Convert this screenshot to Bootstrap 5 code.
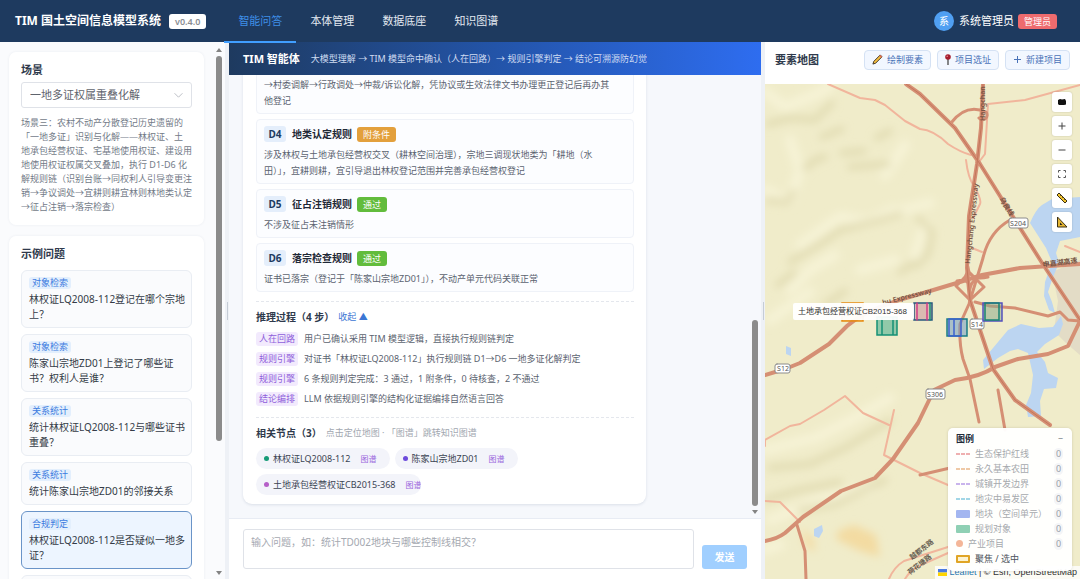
<!DOCTYPE html>
<html lang="zh-CN">
<head>
<meta charset="utf-8">
<meta name="viewport" content="width=device-width, initial-scale=1">
<title>TIM 国土空间信息模型系统</title>
<link href="https://cdn.jsdelivr.net/npm/bootstrap@5.3.0/dist/css/bootstrap.min.css" rel="stylesheet">
<style>
  :root { --navy: #1e3a5f; --line: #e8ecf2; --ink: #2f3a4c; --body: #5b6370; }
  body { font-family: "Noto Sans", "Noto Sans CJK SC", sans-serif; font-size: 9px; line-height: 14px; color: var(--body); background: #f5f7fb; }
  .topbar { height: 42px; background: var(--navy); color: #fff; padding: 0 23px 0 15px; }
  .brand-name { font-size: 12px; line-height: 18px; font-weight: 700; }
  .version { background: #fff; color: #8a8d93; font-weight: 600; padding: 0 6px; border-radius: 3px; line-height: 15px; margin-left: 8px; }
  .main-menu { margin-left: 18px; height: 42px; }
  .main-menu a { width: 72px; text-align: center; color: #e3e9f1; font-size: 11px; line-height: 41px; height: 43px; text-decoration: none; position: relative; z-index: 2; }
  .main-menu a.active { color: #3f8fe8; border-bottom: 2px solid #409eff; }
  .avatar { width: 20px; height: 20px; border-radius: 50%; background: #509ff2; font-size: 10px; line-height: 20px; text-align: center; }
  .user-name { font-size: 11px; margin: 0 4px 0 5px; }
  .role { background: #ee6b6e; border-radius: 3px; padding: 0 6px; line-height: 15px; }

  .side { width: 225px; background: #fafbfd; }
  .side-scroll { padding: 10px 5px 0 9px; overflow: hidden; }
  .panel { background: #fff; border-radius: 7px; box-shadow: 0 0 3px #1e3a5f12; padding: 10px 12px; margin-bottom: 11px; }
  .heading { font-size: 11px; line-height: 16px; font-weight: 700; color: var(--ink); margin: 0; }
  .scene { height: 26px; font-size: 11px; line-height: 16px; color: #5f646d; border: 1px solid #dfe2e8; border-radius: 3px; padding: 4px 24px 4px 8px; margin: 4px 0 8px; background-position: right 8px center; background-size: 9px; --bs-form-select-bg-img: url("data:image/svg+xml,%3csvg xmlns='http://www.w3.org/2000/svg' viewBox='0 0 16 16'%3e%3cpath fill='none' stroke='%23b4b8c0' stroke-width='1.6' d='m1 4 7 7 7-7'/%3e%3c/svg%3e"); }
  .scene-note { color: #737b88; margin: 0; padding-bottom: 1px; white-space: nowrap; }
  .ask { display: block; width: 100%; min-height: 43px; text-align: left; background: #fafbfd; border: 1px solid #e9edf3; border-radius: 6px; padding: 6px 4px 5px 7px; margin-bottom: 6px; color: #343b47; font-size: 10px; line-height: 15px; }
  .ask .kind { display: block; width: 42px; text-align: center; color: #3b7be0; background: #e3effd; border-radius: 3px; font-size: 9px; line-height: 12px; margin-bottom: 3px; }
  .ask.chosen { background: #edf5ff; border-color: #6a94c8; }
  .track { width: 12px; flex: none; padding: 6px 2px 4px 3px; }
  .track .thumb { width: 6px; border-radius: 3px; background: #8b8b8b; }
  .arrow-up, .arrow-down { width: 6px; height: 4px; background: #838383; clip-path: polygon(50% 0, 100% 100%, 0 100%); }
  .arrow-down { clip-path: polygon(0 0, 100% 0, 50% 100%); }
  .splitter { width: 4px; flex: none; background: #eef1f6; }
  .splitter i { width: 1px; height: 18px; background: #c5ccd6; }

  .chat-head { height: 33px; padding: 0 14px; color: #fff; background: linear-gradient(90deg, #1e3a5f 0%, #2354a8 50%, #2e6df0 100%); }
  .chat-head h1 { font-size: 11px; line-height: 16px; font-weight: 700; margin: 0 11px 0 0; }
  .chat-head span { color: #cfdcf2; }
  .talk { background: #f6f8fc; padding: 0 0 0 14px; overflow: hidden; }
  .reply { width: 403px; max-width: 100%; background: #fff; border-radius: 0 0 9px 9px; box-shadow: 0 1px 3px #1e3a5f20; padding: 0 12px 9px 13px; margin-bottom: 14px; }
  .rule { background: #fcfdff; border: 1px solid #eff2f8; border-radius: 4px; padding: 6px 7px 4px; margin-bottom: 5px; }
  .rule p { margin: 5px 0 0; line-height: 16px; }
  .rule-code { width: 22px; text-align: center; background: #e4eefb; color: var(--navy); border-radius: 3px; font-size: 10px; font-weight: 700; line-height: 16px; }
  .rule-name { font-size: 10px; line-height: 16px; font-weight: 700; color: #1f2836; margin: 0 5px 0 6px; }
  .verdict { color: #fff; border-radius: 3px; padding: 0 6px; line-height: 15px; background: #62bc3c; }
  .verdict.partial { background: #e3a03c; }
  .part { border-top: 1px dashed #e4e7ed; padding-top: 7px; }
  .part-steps { margin-top: 9px; }
  .part h2 { font-size: 10px; line-height: 16px; font-weight: 700; color: var(--ink); margin: 0; }
  .fold { border: 0; background: none; padding: 0; color: #3b76d4; }
  .step { line-height: 20px; }
  .step b { width: 42px; font-weight: 400; text-align: center; background: #f2eafd; color: #8f5fdb; border-radius: 3px; line-height: 14px; margin-right: 6px; }
  .hint { color: #a2a7b0; font-size: 9px; }
  .nodes-head { margin-bottom: 7px; }
  .node { height: 21px; max-width: 165px; border-radius: 11px; background: #f3f4fa; padding: 0 13px 0 8px; color: #3b4453; overflow: hidden; white-space: nowrap; }
  .node i { width: 5px; height: 5px; border-radius: 50%; flex: none; margin-right: 4px; }
  .node a { color: #9a66dd; text-decoration: none; font-size: 8px; margin-left: 10px; }
  .node.cut { padding-right: 0; }
  .composer { height: 61px; background: #fff; border-top: 1px solid #e8ecf4; padding: 10px 14px; }
  .composer textarea { height: 40px; resize: none; border: 1px solid #dfe2e8; border-radius: 3px; font-size: 10px; line-height: 15px; padding: 5px 7px; }
  .composer textarea::placeholder { color: #a5a9b1; }
  .send { width: 45px; height: 24px; border: 0; border-radius: 3px; background: #a0cfff; color: #fff; font-size: 10px; font-weight: 600; margin-left: 8px; }

  .map-side { width: 315px; flex: none; }
  .map-head { height: 42px; background: #fff; padding: 0 10px 7px; }
  .tools { gap: 6px; }
  .tool { height: 20px; border: 1px solid #d5e2f4; border-radius: 4px; background: #f2f7ff; color: #4a73b8; padding: 0 7px; font-size: 9px; }
  .map { background: #efebc9; overflow: hidden; }
  .map-art { position: absolute; inset: 0; width: 100%; height: 100%; }
  .map-tools { position: absolute; top: 8px; right: 8px; }
  .map-tools button { width: 20px; height: 20px; border: 0; border-radius: 3px; background: #fff; padding: 0; box-shadow: 0 0 2px #0003; }
  .tip { position: absolute; left: 28px; top: 219px; background: #fffffff2; color: #333; border-radius: 2px; padding: 0 5px; width: 121px; line-height: 17px; font-family: "Liberation Sans", "Noto Sans CJK SC", sans-serif; font-size: 8px; white-space: nowrap; }
  .legend { position: absolute; right: 8px; bottom: 8px; width: 124px; background: #fffffff5; border-radius: 5px; padding: 3px 9px 5px 8px; box-shadow: 0 0 3px #0002; z-index: 2; }
  .legend li, .legend .legend-title { line-height: 15px; height: 15px; color: #a6a9ad; }
  .legend .legend-title { color: #222b39; font-weight: 700; }
  .legend .dash { width: 14px; height: 2px; background: repeating-linear-gradient(90deg, currentColor 0 4px, transparent 4px 5px); margin-right: 5px; }
  .legend .fill { width: 14px; height: 8px; margin-right: 5px; border-radius: 1px; }
  .legend .spot { width: 7px; height: 7px; margin-right: 5px; background: #f4b698; }
  .legend .count { color: #9aa0a8; margin-left: auto; background: #f4f5f7; border-radius: 5px; width: 9px; line-height: 12px; text-align: center; }
  .credit { position: absolute; right: 0; bottom: 0; background: #fffc; padding: 0 3px; font-family: "Liberation Sans", sans-serif; font-size: 9px; line-height: 13px; white-space: nowrap; color: #333; }
  .credit a { color: #2878b0; text-decoration: none; }
</style>
</head>
<body class="vh-100 overflow-hidden d-flex flex-column">
<header class="topbar d-flex align-items-center flex-shrink-0">
  <span class="brand-name">TIM 国土空间信息模型系统</span>
  <span class="version">v0.4.0</span>
  <nav class="main-menu d-flex">
    <a class="active" href="#qa">智能问答</a><a href="#ontology">本体管理</a><a href="#data">数据底座</a><a href="#graph">知识图谱</a>
  </nav>
  <span class="avatar ms-auto">系</span><span class="user-name">系统管理员</span><span class="role">管理员</span>
</header>

<main class="d-flex flex-grow-1" style="min-height:0">
  <aside class="side d-flex flex-shrink-0">
    <div class="side-scroll flex-grow-1">
      <section class="panel">
        <label class="heading d-block" for="scene">场景</label>
        <select class="form-select scene" id="scene"><option>一地多证权属重叠化解</option></select>
        <p class="scene-note">场景三：农村不动产分散登记历史遗留的<br>「一地多证」识别与化解——林权证、土<br>地承包经营权证、宅基地使用权证、建设用<br>地使用权证权属交叉叠加，执行 D1-D6 化<br>解规则链（识别台账→同权利人引导变更注<br>销→争议调处→宜耕则耕宜林则林地类认定<br>→征占注销→落宗检查）</p>
      </section>
      <section class="panel">
        <h2 class="heading mb-1 pb-1">示例问题</h2>
        <button class="ask mt-0" type="button"><span class="kind">对象检索</span>林权证LQ2008-112登记在哪个宗地上？</button>
        <button class="ask" type="button"><span class="kind">对象检索</span>陈家山宗地ZD01上登记了哪些证书？权利人是谁？</button>
        <button class="ask" type="button"><span class="kind">关系统计</span>统计林权证LQ2008-112与哪些证书重叠？</button>
        <button class="ask" type="button"><span class="kind">关系统计</span>统计陈家山宗地ZD01的邻接关系</button>
        <button class="ask chosen" type="button"><span class="kind">合规判定</span>林权证LQ2008-112是否疑似一地多证？</button>
        <button class="ask" type="button"></button>
      </section>
    </div>
    <div class="track d-flex flex-column" aria-hidden="true" style="margin-left:4px">
      <span class="arrow-up"></span><span class="thumb mt-1" style="height:73%"></span><span class="arrow-down mt-auto"></span>
    </div>
  </aside>
  <div class="splitter d-flex align-items-center justify-content-center"><i></i></div>

  <section class="d-flex flex-column flex-grow-1" style="min-width:0">
    <div class="chat-head d-flex align-items-center flex-shrink-0">
      <h1>TIM 智能体</h1><span>大模型理解 → TIM 模型命中确认（人在回路）→ 规则引擎判定 → 结论可溯源防幻觉</span>
    </div>
    <div class="talk d-flex flex-grow-1" style="min-height:0">
      <div class="flex-grow-1 d-flex flex-column justify-content-end">
        <article class="reply">
          <div class="rule"><p>→村委调解→行政调处→仲裁/诉讼化解，凭协议或生效法律文书办理更正登记后再办其<br>他登记</p></div>
          <div class="rule">
            <div class="d-flex align-items-center"><span class="rule-code">D4</span><span class="rule-name">地类认定规则</span><span class="verdict partial">附条件</span></div>
            <p>涉及林权与土地承包经营权交叉（耕林空间治理），宗地三调现状地类为「耕地（水<br>田）」，宜耕则耕，宜引导退出林权登记范围并完善承包经营权登记</p>
          </div>
          <div class="rule">
            <div class="d-flex align-items-center"><span class="rule-code">D5</span><span class="rule-name">征占注销规则</span><span class="verdict">通过</span></div>
            <p>不涉及征占未注销情形</p>
          </div>
          <div class="rule">
            <div class="d-flex align-items-center"><span class="rule-code">D6</span><span class="rule-name">落宗检查规则</span><span class="verdict">通过</span></div>
            <p>证书已落宗（登记于「陈家山宗地ZD01」），不动产单元代码关联正常</p>
          </div>
          <div class="part part-steps pb-2">
            <div class="d-flex align-items-center gap-1 mb-1"><h2>推理过程（4 步）</h2><button class="fold" type="button">收起 ▲</button></div>
            <div class="step d-flex align-items-center"><b>人在回路</b>用户已确认采用 TIM 模型逻辑，直接执行规则链判定</div>
            <div class="step d-flex align-items-center"><b>规则引擎</b>对证书「林权证LQ2008-112」执行规则链 D1→D6 一地多证化解判定</div>
            <div class="step d-flex align-items-center"><b>规则引擎</b>6 条规则判定完成：3 通过，1 附条件，0 待核查，2 不通过</div>
            <div class="step d-flex align-items-center"><b>结论编排</b>LLM 依据规则引擎的结构化证据编排自然语言回答</div>
          </div>
          <div class="part">
            <div class="nodes-head d-flex align-items-center gap-1"><h2>相关节点（3）</h2><span class="hint">点击定位地图 · 「图谱」跳转知识图谱</span></div>
            <div class="d-flex flex-wrap" style="gap:5px">
              <span class="node d-flex align-items-center"><i style="background:#179b77"></i>林权证LQ2008-112<a href="#graph">图谱</a></span>
              <span class="node d-flex align-items-center"><i style="background:#6d4bdc"></i>陈家山宗地ZD01<a href="#graph">图谱</a></span>
              <span class="node cut d-flex align-items-center"><i style="background:#b65fc8"></i>土地承包经营权证CB2015-368<a href="#graph">图谱</a></span>
            </div>
          </div>
        </article>
      </div>
      <div class="track d-flex flex-column justify-content-end" aria-hidden="true">
        <span class="thumb" style="height:43%"></span><span class="arrow-down mt-1"></span>
      </div>
    </div>
    <form class="composer d-flex align-items-end flex-shrink-0">
      <textarea class="form-control" aria-label="输入问题" placeholder="输入问题，如：统计TD002地块与哪些控制线相交？"></textarea>
      <button class="send flex-shrink-0" type="button">发送</button>
    </form>
  </section>
  <div class="splitter d-flex align-items-center justify-content-center"><i></i></div>

  <section class="map-side d-flex flex-column">
    <div class="map-head d-flex align-items-center">
      <h2 class="heading me-auto">要素地图</h2>
      <div class="tools d-flex">
        <button class="tool d-flex align-items-center gap-1" type="button"><svg width="11" height="11" viewBox="0 0 12 12"><path d="M1 11 2 8 9 1l2 2-7 7z" fill="#f3bd3f" stroke="#3a2f23"/><path d="m8 2 2 2 1-1-2-2z" fill="#e26a5a"/></svg>绘制要素</button>
        <button class="tool d-flex align-items-center gap-1" type="button"><svg width="6" height="11" viewBox="0 0 6 11"><path d="M3 5v6" stroke="#555" stroke-width="1.4"/><circle cx="3" cy="3" r="2.8" fill="#a51d2d"/><circle cx="2.2" cy="2.2" r=".8" fill="#e98a8f"/></svg>项目选址</button>
        <button class="tool d-flex align-items-center gap-1" type="button"><svg width="9" height="9" viewBox="0 0 9 9"><path d="M4.500 1v7M1 4.500h7" stroke="#4a73b8" fill="none"/></svg>新建项目</button>
      </div>
    </div>
    <div class="map position-relative flex-grow-1">
      <svg class="map-art" viewBox="765 84 315 495" preserveAspectRatio="xMidYMid slice" fill="none" stroke-linecap="round" stroke-linejoin="round">
        <defs><filter id="soft" x="-20%" y="-20%" width="140%" height="140%"><feGaussianBlur stdDeviation="4"/></filter></defs>
        <rect x="765" y="84" width="315" height="495" fill="#f0ecca"/>
        <g filter="url(#soft)">
          <g stroke="#f8f5da" stroke-width="10" opacity=".8">
            <path d="M765 92l20 15 30-12 15-8M790 140l10 30-10 30M765 190l20 10M800 245l40-28 28 5 25-12M790 290l20-20 25-15M770 320l40-28M765 450l50-12 40-20 35-20M770 520l50-20 50-12"/>
            <path d="M885 215l45-12M860 270l35-10M905 145l-20 30M765 550l15-5M925 225l-10 30"/>
          </g>
          <g stroke="#ddd6ab" stroke-width="6" opacity=".8">
            <path d="M768 124l22-6 25 2 17-17M822 137l20-8M842 153l22-2M877 138l13-7M805 168l12-9 8-2M850 167l38-3M790 262l30-18 20-14 40-10 20-6"/>
            <path d="M768 200l20 2 5-10M778 285l16-12M825 305l20-14M900 272l12-8M770 468l40-4 35-16 45-27M765 500l35-10 40-8M800 510l35-6 50-24M918 218l14 14-4 22-12 12"/>
          </g>
          <path d="M838 531l16-6 22 10 4 22-20-6-24-12z" fill="#f3dba2"/>
          <path d="M800 528l14 10 2 14-10-4z" fill="#f3dfab"/>
        </g>
        <path d="M1052 272l28-12v95l-14-12-12-12 4-30z" fill="#e3dcc6"/>
        <g fill="#bcd5f1">
          <path d="M1030 223q6-14 12-18l10-6 28-2v40l-20 4-4 12 3 10-6 14-5 15 4 10 3 11-6-3-5-14 1-14 7-20-6-14z"/>
          <path d="M984 369l-1-9 10-12 15-18 13-6 18 4 14-1 8-11 2 8-4 11-14 9-8 8 8 10 3 11 10 5-2 10-12 1-4 12 1 15-13 1-2-12 5-12 2-18-5-22-10-4-8 2-12 7z"/>
          <path d="M786 346l5 2v8l-5-2zM814 529l8-4 1 6-4 7-5-2z"/>
        </g>
        <g stroke="#f1b59c" stroke-width="2">
          <path d="M828 84l32 14 15 2 10 5 20 16 15 8q14 1 28 15 12 8 23 11M966 160q2 18 8 26 8 14 6 18l-7 14M988 104l37-4 55-15M988 104l-3 50-6 8M972 248l10 4"/>
          <path d="M765 446v-6l25-14 10-2 24-14 21-14 18 17 26 12M894 410l-10 45 36 18 28 12M765 501l15 1 20 20M889 579q5-12 15-18l44-14M905 579q6-10 16-14l27-12M1065 246l15 6"/>
        </g>
        <g stroke="#d58f74">
          <path stroke-width="3" d="M1010 220q-21 12-27 38l-14 46-9 20q-1 20 3 35l7 20 9 43M975 302l15 4 25 2 33 8 12-4 8 8 12 1M998 390l7 40M797 525l8 26 1 28M920 475l30-7"/>
          <path stroke-width="4" d="M906 84l14 10 35 34 25 36 30 48 34 54 36 54M983 84l-2 44-4 36-8 52-2 52 3 32 9 27 14 42 22 31 35 25M765 375l20-6 15-6 29-19 18-18q14-12 33-19 20-8 40-13l40-12 22-7 38-7 60-4M765 541q12-2 20-8l18-16 38-26 34-13 18-19 25-36 16-33 21-10q25-3 40-13l23-8 30-5 20-8 12-25"/>
          <path stroke-width="3" d="M951 123q15-20 35-11a4 4 0 1 1-7 6M956 284q12-5 12-17 1 14 20 10-16-1-18 12 0-11-13-8M956 286l14-13 14 14-14 13z"/>
        </g>
        <g stroke="#c4765b" stroke-width="1"><path d="M906 84l14 10 35 34 25 36 30 48 34 54 36 54M983 84l-2 44-4 36-8 52-2 52 3 32 9 27 14 42 22 31 35 25"/></g>
        <g font-family="Noto Sans, Noto Sans CJK SC, sans-serif" fill="#755444" font-size="7" font-weight="600">
          <text transform="translate(970 264) rotate(-84)">Hangchang Expressway</text>
          <text transform="translate(985 121) rotate(-90)">Hangchan</text>
          <text transform="translate(883 305) rotate(-14)">hu Expressway</text>
          <text transform="translate(999 199) rotate(58)">乌良线</text>
          <text transform="translate(1043 267) rotate(-7)">申嘉湖高速</text>
          <text transform="translate(912 560) rotate(-38)" fill="#665f52">越都东路</text>
          <text transform="translate(910 575) rotate(-38)" fill="#665f52">荷花塘路</text>
        </g>
        <g fill="#fff" stroke="#8c8c8c"><rect x="1009" y="218" width="19" height="10" rx="2"/><rect x="970" y="319" width="14" height="10" rx="2"/><rect x="775" y="364" width="15" height="9" rx="2"/><rect x="926" y="389" width="19" height="10" rx="2"/></g>
        <g font-family="Noto Sans, sans-serif" fill="#555" font-size="7" text-anchor="middle"><text x="1018" y="226">S204</text><text x="977" y="327">S14</text><text x="783" y="371">S12</text><text x="935" y="397">S306</text></g>
        <g stroke-width="1.500" stroke-linejoin="miter">
          <rect x="842" y="303" width="21" height="18" fill="#f2a72d66" stroke="#e68a10"/>
          <path d="M877 317h20v18h-20zM882 317v18M893 317v18" fill="#3dab8c88" stroke="#159074"/>
          <path d="M914 303h18v17h-18z" fill="#c9919b88" stroke="#28587e"/><path d="M917 303v17M927 303v17" stroke="#d43d86"/><path d="M930 303v17" stroke="#159074"/>
          <path d="M947 319h20v17h-20z" fill="#6c9ac588" stroke="#197c84"/><path d="M949 319h12v17h-12zM954 319v17" stroke="#3d61cf"/>
          <path d="M983 303h19v18h-19z" fill="#8aa98b88" stroke="#5350bd"/><path d="M985 303h14v17h-14z" stroke="#198372"/>
        </g>
      </svg>
      <div class="tip">土地承包经营权证CB2015-368</div>
      <div class="map-tools d-flex flex-column gap-1">
        <button type="button" aria-label="图层"><svg class="d-block mx-auto" width="10" height="10" viewBox="0 0 10 10"><path d="M1 3l2-1 2 .5L8 2l1 2v3.500L7 8H2L1 7z" fill="#111"/></svg></button>
        <button type="button" aria-label="放大"><svg class="d-block mx-auto" width="10" height="10" viewBox="0 0 10 10"><path d="M5 1.500v7M1.500 5h7" stroke="#444"/></svg></button>
        <button type="button" aria-label="缩小"><svg class="d-block mx-auto" width="10" height="10" viewBox="0 0 10 10"><path d="M1.500 5h7" stroke="#444"/></svg></button>
        <button type="button" aria-label="全屏"><svg class="d-block mx-auto" width="10" height="10" viewBox="0 0 10 10"><path d="M1.500 3.500v-2h2M6.500 1.500h2v2M8.500 6.500v2h-2M3.500 8.500h-2v-2" fill="none" stroke="#555"/></svg></button>
        <button type="button" aria-label="测距"><svg class="d-block mx-auto" width="12" height="12" viewBox="0 0 12 12"><path d="m1 3 2-2 8 8-2 2z" fill="#f0c22e" stroke="#3a3015"/><path d="m4 4 1-1M6 6l1-1M8 8l1-1" stroke="#3a3015" stroke-width=".7"/></svg></button>
        <button type="button" aria-label="测面"><svg class="d-block mx-auto" width="12" height="12" viewBox="0 0 12 12"><path d="M1.500 1v10H11z" fill="#e5b634" stroke="#3a3015"/><path d="M4 6.500V9h2.500z" fill="#222"/></svg></button>
      </div>
      <div class="legend">
        <div class="legend-title d-flex justify-content-between"><span>图例</span><span class="fw-normal text-secondary">−</span></div>
        <ul class="list-unstyled m-0">
          <li class="d-flex align-items-center"><span class="dash" style="color:#efb0b0"></span>生态保护红线<span class="count">0</span></li>
          <li class="d-flex align-items-center"><span class="dash" style="color:#efc9a6"></span>永久基本农田<span class="count">0</span></li>
          <li class="d-flex align-items-center"><span class="dash" style="color:#c9b4ec"></span>城镇开发边界<span class="count">0</span></li>
          <li class="d-flex align-items-center"><span class="dash" style="color:#a2d6e6"></span>地灾中易发区<span class="count">0</span></li>
          <li class="d-flex align-items-center"><span class="fill" style="background:#a3b6f0"></span>地块（空间单元）<span class="count">0</span></li>
          <li class="d-flex align-items-center"><span class="fill" style="background:#8fd0b4"></span>规划对象<span class="count">0</span></li>
          <li class="d-flex align-items-center"><span class="spot rounded-circle"></span>产业项目<span class="count">0</span></li>
          <li class="d-flex align-items-center" style="color:#4d535c"><span class="fill" style="background:#fdf3d0;border:2px solid #e0a526"></span>聚焦 / 选中</li>
        </ul>
      </div>
      <div class="credit"><svg width="9" height="7" viewBox="0 0 9 7"><path fill="#4c7be1" d="M0 0h9v3.500H0z"/><path fill="#ffd500" d="M0 3.500h9V7H0z"/></svg> <a href="#leaflet">Leaflet</a> | © Esri, OpenStreetMap</div>
    </div>
  </section>
</main>
<script src="https://cdn.jsdelivr.net/npm/bootstrap@5.3.0/dist/js/bootstrap.bundle.min.js"></script>
</body>
</html>
